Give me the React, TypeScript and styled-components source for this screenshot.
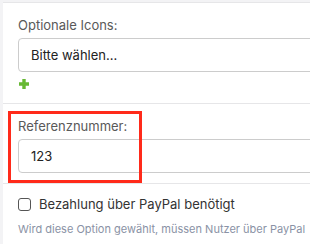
import styled, { createGlobalStyle } from "styled-components";

const GlobalStyle = createGlobalStyle`
  html, body {
    margin: 0;
    padding: 0;
    background: #f3f3f5;
    font-family: Inter, "Noto Sans", sans-serif;
  }
`;

const Page = styled.div`
  width: 310px;
  height: 244px;
  overflow: hidden;
  padding-top: 2px;
  box-sizing: border-box;
`;

const Panel = styled.div`
  margin-left: 3px;
  height: 100%;
  background: #fff;
  border-top: 1px solid #e6e6e8;
`;

const Section = styled.div<{ $top: number; $bottom: number }>`
  position: relative;
  padding: ${(p) => p.$top}px 0 ${(p) => p.$bottom}px 15px;
  border-bottom: 1px solid #e6e6e8;
  &:last-child {
    border-bottom: none;
  }
`;

const Label = styled.div`
  font-size: 13px;
  line-height: 18px;
  color: #595959;
  margin-bottom: 4px;
`;

const Field = styled.div`
  height: 34px;
  box-sizing: border-box;
  width: 320px;
  border: 1px solid #ccc;
  border-radius: 4px;
  padding-left: 12px;
  display: flex;
  align-items: center;
  font-size: 13px;
  color: #222;
`;

const AddButton = styled.div`
  margin-top: 6px;
  width: 12px;
  height: 12px;
  display: flex;
`;

const Highlight = styled.div`
  position: absolute;
  left: 5px;
  top: 7px;
  width: 134px;
  height: 72px;
  box-sizing: border-box;
  border: 3px solid #ff2a1a;
`;

const CheckRow = styled.label`
  display: flex;
  align-items: center;
  gap: 8px;
  font-size: 13px;
  color: #333;
  line-height: 20px;
`;

const Box = styled.span`
  width: 13px;
  height: 13px;
  box-sizing: border-box;
  border: 1px solid #555;
  border-radius: 3px;
  background: #fff;
`;

const Help = styled.div`
  margin-top: 7px;
  font-size: 11px;
  line-height: 16px;
  color: #8a92a5;
  white-space: nowrap;
`;

export default function App() {
  return (
    <>
      <GlobalStyle />
      <Page>
        <Panel>
          <Section $top={13} $bottom={13}>
            <Label>Optionale Icons:</Label>
            <Field>Bitte wählen...</Field>
            <AddButton>
              <svg width="12" height="12" viewBox="0 0 12 12">
                <path d="M6 1v10M1 6h10" stroke="#67b834" strokeWidth="3.4" />
              </svg>
            </AddButton>
          </Section>
          <Section $top={13} $bottom={10}>
            <Label>Referenznummer:</Label>
            <Field>123</Field>
            <Highlight />
          </Section>
          <Section $top={10} $bottom={0}>
            <CheckRow>
              <Box />
              Bezahlung über PayPal benötigt
            </CheckRow>
            <Help>Wird diese Option gewählt, müssen Nutzer über PayPal</Help>
          </Section>
        </Panel>
      </Page>
    </>
  );
}
